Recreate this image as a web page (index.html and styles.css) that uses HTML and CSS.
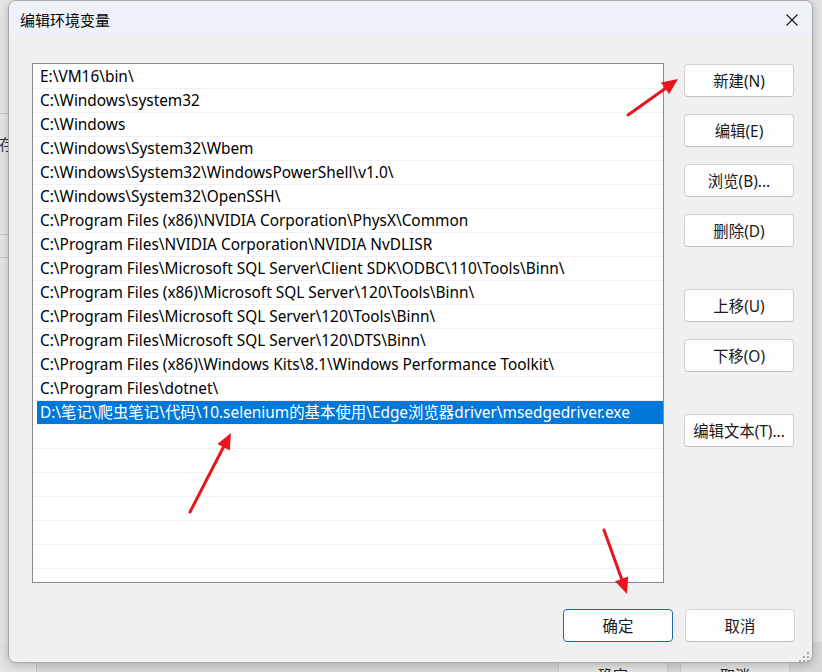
FILE: index.html
```html
<!DOCTYPE html>
<html lang="zh-CN">
<head>
    <meta charset="UTF-8">
    <title>编辑环境变量</title>
    <link rel="stylesheet" href="styles.css">
</head>
<body>
    <!-- window behind the dialog -->
    <div class="backdrop">
        <div class="bg-side">
            <div class="bg-rule first"></div>
            <div class="bg-char">存</div>
            <div class="bg-rule second"></div>
            <div class="bg-rule third"></div>
        </div>
        <div class="bg-foot">
            <div class="bg-btn">确定</div>
            <div class="bg-btn">取消</div>
        </div>
    </div>

    <!-- Dialog -->
    <div class="dialog">
        <div class="titlebar">
            <span class="title">编辑环境变量</span>
            <span class="close">
                <svg width="14" height="14" viewBox="0 0 14 14"><path d="M1.5 1.5L12.5 12.5M12.5 1.5L1.5 12.5" stroke="#1b1b1b" stroke-width="1.2"/></svg>
            </span>
        </div>

        <div class="content">
            <div class="path-list">
                <div class="row">E:\VM16\bin\</div>
                <div class="row">C:\Windows\system32</div>
                <div class="row">C:\Windows</div>
                <div class="row">C:\Windows\System32\Wbem</div>
                <div class="row">C:\Windows\System32\WindowsPowerShell\v1.0\</div>
                <div class="row">C:\Windows\System32\OpenSSH\</div>
                <div class="row">C:\Program Files (x86)\NVIDIA Corporation\PhysX\Common</div>
                <div class="row">C:\Program Files\NVIDIA Corporation\NVIDIA NvDLISR</div>
                <div class="row">C:\Program Files\Microsoft SQL Server\Client SDK\ODBC\110\Tools\Binn\</div>
                <div class="row">C:\Program Files (x86)\Microsoft SQL Server\120\Tools\Binn\</div>
                <div class="row">C:\Program Files\Microsoft SQL Server\120\Tools\Binn\</div>
                <div class="row">C:\Program Files\Microsoft SQL Server\120\DTS\Binn\</div>
                <div class="row">C:\Program Files (x86)\Windows Kits\8.1\Windows Performance Toolkit\</div>
                <div class="row">C:\Program Files\dotnet\</div>
                <div class="row editing"><span class="edit">D:\笔记\爬虫笔记\代码\10.selenium的基本使用\Edge浏览器driver\msedgedriver.exe</span></div>
                <div class="row"></div>
                <div class="row"></div>
                <div class="row"></div>
                <div class="row"></div>
                <div class="row"></div>
                <div class="row"></div>
                <div class="row"></div>
            </div>

            <div class="side-buttons">
                <button class="btn">新建(N)</button>
                <button class="btn">编辑(E)</button>
                <button class="btn">浏览(B)...</button>
                <button class="btn">删除(D)</button>
                <button class="btn group">上移(U)</button>
                <button class="btn">下移(O)</button>
                <button class="btn group">编辑文本(T)...</button>
            </div>
        </div>

        <div class="footer">
            <button class="btn default">确定</button>
            <button class="btn">取消</button>
        </div>

        <svg class="grip" width="12" height="12" viewBox="0 0 12 12">
            <rect x="10" y="2" width="2" height="2"/>
            <rect x="6" y="6" width="2" height="2"/>
            <rect x="10" y="6" width="2" height="2"/>
            <rect x="2" y="10" width="2" height="2"/>
            <rect x="6" y="10" width="2" height="2"/>
            <rect x="10" y="10" width="2" height="2"/>
        </svg>
    </div>

    <!-- red annotation arrows -->
    <svg class="arrows" width="822" height="672" viewBox="0 0 822 672">
        <g stroke="#e8141e" stroke-width="3" stroke-linecap="round" fill="none">
            <line x1="628" y1="115" x2="666" y2="88"/>
            <line x1="190" y1="512" x2="224" y2="446"/>
            <line x1="604" y1="530" x2="622" y2="580"/>
        </g>
        <g fill="#e8141e">
            <polygon points="678,79 669.1,94 660.9,82.6"/>
            <polygon points="231,433 229.8,450.4 217.4,444"/>
            <polygon points="627,594 628.2,576.5 615,581.3"/>
        </g>
    </svg>
</body>
</html>
```

FILE: styles.css
```css
/* General */
body {
    margin: 0;
    width: 822px;
    height: 672px;
    overflow: hidden;
    position: relative;
    background-color: #e3e3e3;
    font-family: "Noto Sans", "Noto Sans CJK SC", sans-serif;
    font-size: 15.4px;
    color: #000;
}

/* Window behind */
.backdrop {
    height: 672px;
    display: flex;
    flex-direction: column;
}

.bg-side {
    flex: 1;
    width: 40px;
    background-color: #e6e6e6;
}

.bg-rule {
    height: 1px;
    background-color: #c6c6c6;
}
.bg-rule.first { margin-top: 113px; }
.bg-rule.second { margin-top: 81px; }
.bg-rule.third { margin-top: 22px; }

.bg-char {
    margin-top: 21px;
    margin-left: -1px;
    height: 18px;
    line-height: 18px;
    font-family: "Noto Sans CJK SC", sans-serif;
    font-size: 15px;
    color: #333;
}

.bg-foot {
    height: 30px;
    margin-left: 36px;
    padding-left: 521px;
    background-color: #d8d8d8;
    border-left: 1px solid #c2c2c2;
    display: flex;
    gap: 12px;
    align-items: flex-start;
}

.bg-btn {
    width: 110px;
    height: 34px;
    margin-top: 16px;
    box-sizing: border-box;
    background-color: #e4e4e4;
    border: 1px solid #c8c8c8;
    text-align: center;
    line-height: 32px;
    font-family: "Noto Sans CJK SC", sans-serif;
    font-size: 15px;
    color: #222;
}

/* Dialog */
.dialog {
    position: absolute;
    left: 8px;
    top: 0;
    width: 805px;
    height: 663px;
    box-sizing: border-box;
    border: 1px solid #a8a8a8;
    border-radius: 8px;
    background-color: #f0f0f0;
    box-shadow: 0 2px 10px rgba(0, 0, 0, 0.22);
    overflow: hidden;
    display: flex;
    flex-direction: column;
}

.titlebar {
    height: 35px;
    flex-shrink: 0;
    background-color: #eef2f8;
    display: flex;
    align-items: center;
    justify-content: space-between;
    padding-left: 11px;
}

.title {
    font-family: "Noto Sans CJK SC", sans-serif;
    font-size: 15px;
    margin-top: 1px;
}

.close {
    width: 42px;
    height: 35px;
    display: flex;
    align-items: center;
    justify-content: center;
    margin-right: -1px;
    margin-top: 2px;
}

.content {
    display: flex;
    gap: 20px;
    padding: 27px 18px 0 23px;
}

/* Path list */
.path-list {
    width: 632px;
    height: 520px;
    box-sizing: border-box;
    border: 1px solid #868a91;
    background-color: #fff;
    padding-top: 1px;
    overflow: hidden;
}

.row {
    height: 24px;
    box-sizing: border-box;
    border-bottom: 1px solid #f0f0f0;
    padding-left: 7px;
    line-height: 23px;
    white-space: nowrap;
}

.row.editing {
    padding-left: 4px;
}

.edit {
    display: block;
    height: 23px;
    padding-left: 3px;
    background-color: #0078d7;
    color: #fff;
}

/* Buttons */
.side-buttons {
    display: flex;
    flex-direction: column;
    gap: 17px;
    margin-top: 1px;
}

.btn {
    width: 110px;
    height: 33px;
    box-sizing: border-box;
    padding: 0;
    background-color: #fdfdfd;
    border: 1px solid #d2d2d2;
    border-bottom-color: #c2c2c2;
    border-radius: 4px;
    font-family: "Noto Sans", "Noto Sans CJK SC", sans-serif;
    font-size: 15.4px;
    color: #1a1a1a;
}

.btn.group {
    margin-top: 25px;
}

.btn.default {
    border: 1px solid #1a68b8;
}

.footer {
    display: flex;
    justify-content: flex-end;
    gap: 12px;
    padding: 26px 17px 0 0;
}

.grip {
    position: absolute;
    right: 3px;
    bottom: 0;
    fill: #a6a6a6;
}

/* Annotations */
.arrows {
    position: absolute;
    left: 0;
    top: 0;
    pointer-events: none;
}
```
